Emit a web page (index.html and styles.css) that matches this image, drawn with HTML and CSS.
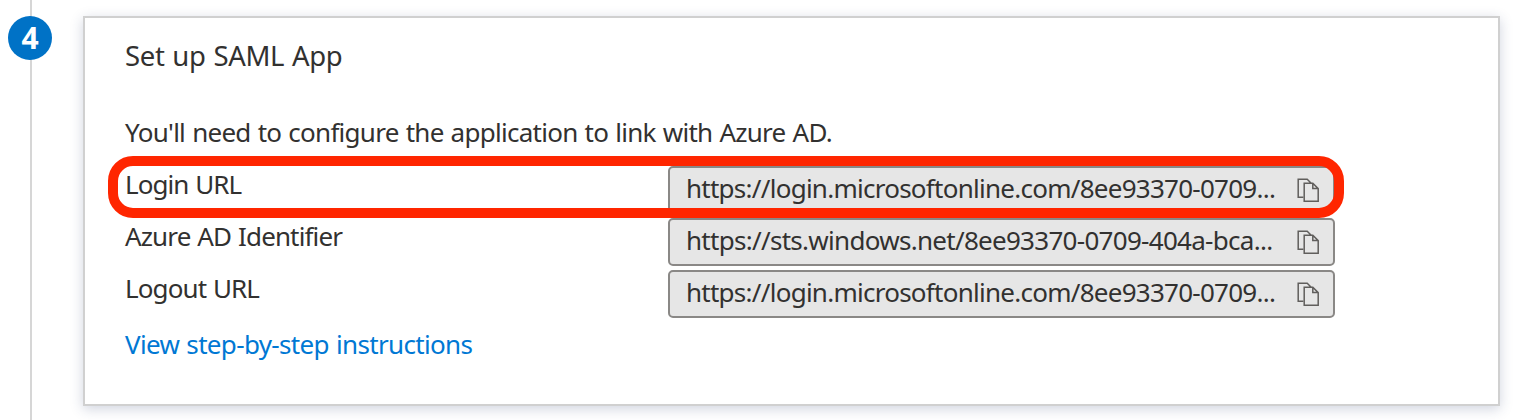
FILE: index.html
```html
<!DOCTYPE html>
<html lang="en">
<head>
<meta charset="utf-8">
<title>Set up SAML App</title>
<link rel="stylesheet" href="styles.css">
</head>
<body>
<svg class="defs" width="0" height="0" aria-hidden="true">
  <symbol id="copy" viewBox="0 0 24 26">
    <path d="M7.2 20.3H2.2V2.2H11.2L15.2 6.2M8.2 6.2H16.8L22.2 11.6V24.2H8.2ZM16.8 6.2V11.6H22.2"/>
  </symbol>
</svg>
<main class="step">
  <div class="rail"><span class="badge">4</span></div>
  <section class="card">
    <h2 class="title"><span class="t-title">Set up SAML App</span></h2>
    <p class="desc"><span class="t-desc">You'll need to configure the application to link with Azure AD.</span></p>
    <div class="rows">
      <div class="row">
        <span class="label"><span class="t-login">Login URL</span></span>
        <div class="field"><span class="url t-url">https://login.microsoftonline.com/8ee93370-0709...</span><svg class="copy"><use href="#copy"/></svg></div>
      </div>
      <div class="row">
        <span class="label"><span class="t-azure">Azure AD Identifier</span></span>
        <div class="field"><span class="url t-sts">https://sts.windows.net/8ee93370-0709-404a-bca...</span><svg class="copy"><use href="#copy"/></svg></div>
      </div>
      <div class="row">
        <span class="label"><span class="t-logout">Logout URL</span></span>
        <div class="field"><span class="url t-url">https://login.microsoftonline.com/8ee93370-0709...</span><svg class="copy"><use href="#copy"/></svg></div>
      </div>
      <div class="highlight"></div>
    </div>
    <a class="link"><span class="t-link">View step-by-step instructions</span></a>
  </section>
</main>
</body>
</html>
```
FILE: styles.css
```css
* { box-sizing: border-box; }
body {
  margin: 0;
  height: 420px;
  overflow: hidden;
  background: #fff;
  color: #323130;
  font: 26px/36px "Noto Sans", "Open Sans", sans-serif;
  word-spacing: 1px;
}
.defs { display: block; }
.step { display: flex; height: 420px; }
.rail {
  width: 83px;
  padding: 16px 0 0 8px;
  background: linear-gradient(#d6d6d6, #d6d6d6) 30px 0 / 2px 100% no-repeat;
}
.badge {
  display: block;
  width: 44px;
  height: 44px;
  border-radius: 50%;
  background: #0072c6;
  color: #fff;
  font-weight: 700;
  font-size: 30px;
  line-height: 43px;
  text-align: center;
}
.card {
  width: 1417px;
  height: 390px;
  margin-top: 16px;
  padding: 20px 40px;
  border: 2px solid #d0d0d0;
  box-shadow: 0 3px 12px rgba(40, 60, 110, .22);
  white-space: nowrap;
}
.title, .desc { margin: 0; font-size: 26px; font-weight: 400; }
.title { height: 36px; font-size: 27.5px; line-height: 35px; }
.desc { margin-top: 40px; }
.rows { position: relative; display: grid; gap: 4px; margin-top: 16px; }
.row { display: grid; grid-template-columns: 543px 667px; height: 48px; }
.field {
  display: flex;
  justify-content: space-between;
  height: 48px;
  padding: 0 13px 0 16px;
  border: 2px solid #8a8886;
  border-radius: 5px;
  background: #e6e6e6;
}
.url { line-height: 41px; }
.copy {
  width: 24px;
  height: 26px;
  margin-top: 9px;
  fill: none;
  stroke: #605e5c;
  stroke-width: 1.5;
}
.highlight {
  position: absolute;
  top: -10px;
  left: -17px;
  width: 1236px;
  height: 62px;
  border: 10px solid #ff2600;
  border-radius: 25px;
}
.link { display: block; margin-top: 8px; color: #0078d4; }
.t-title { letter-spacing: -.33px; }
.t-desc { letter-spacing: -.73px; }
.t-login { letter-spacing: -.95px; }
.t-azure { letter-spacing: -.87px; }
.t-logout { letter-spacing: -.9px; }
.t-link { letter-spacing: -.66px; }
.t-url { letter-spacing: -.74px; }
.t-sts { letter-spacing: -.71px; }
```
